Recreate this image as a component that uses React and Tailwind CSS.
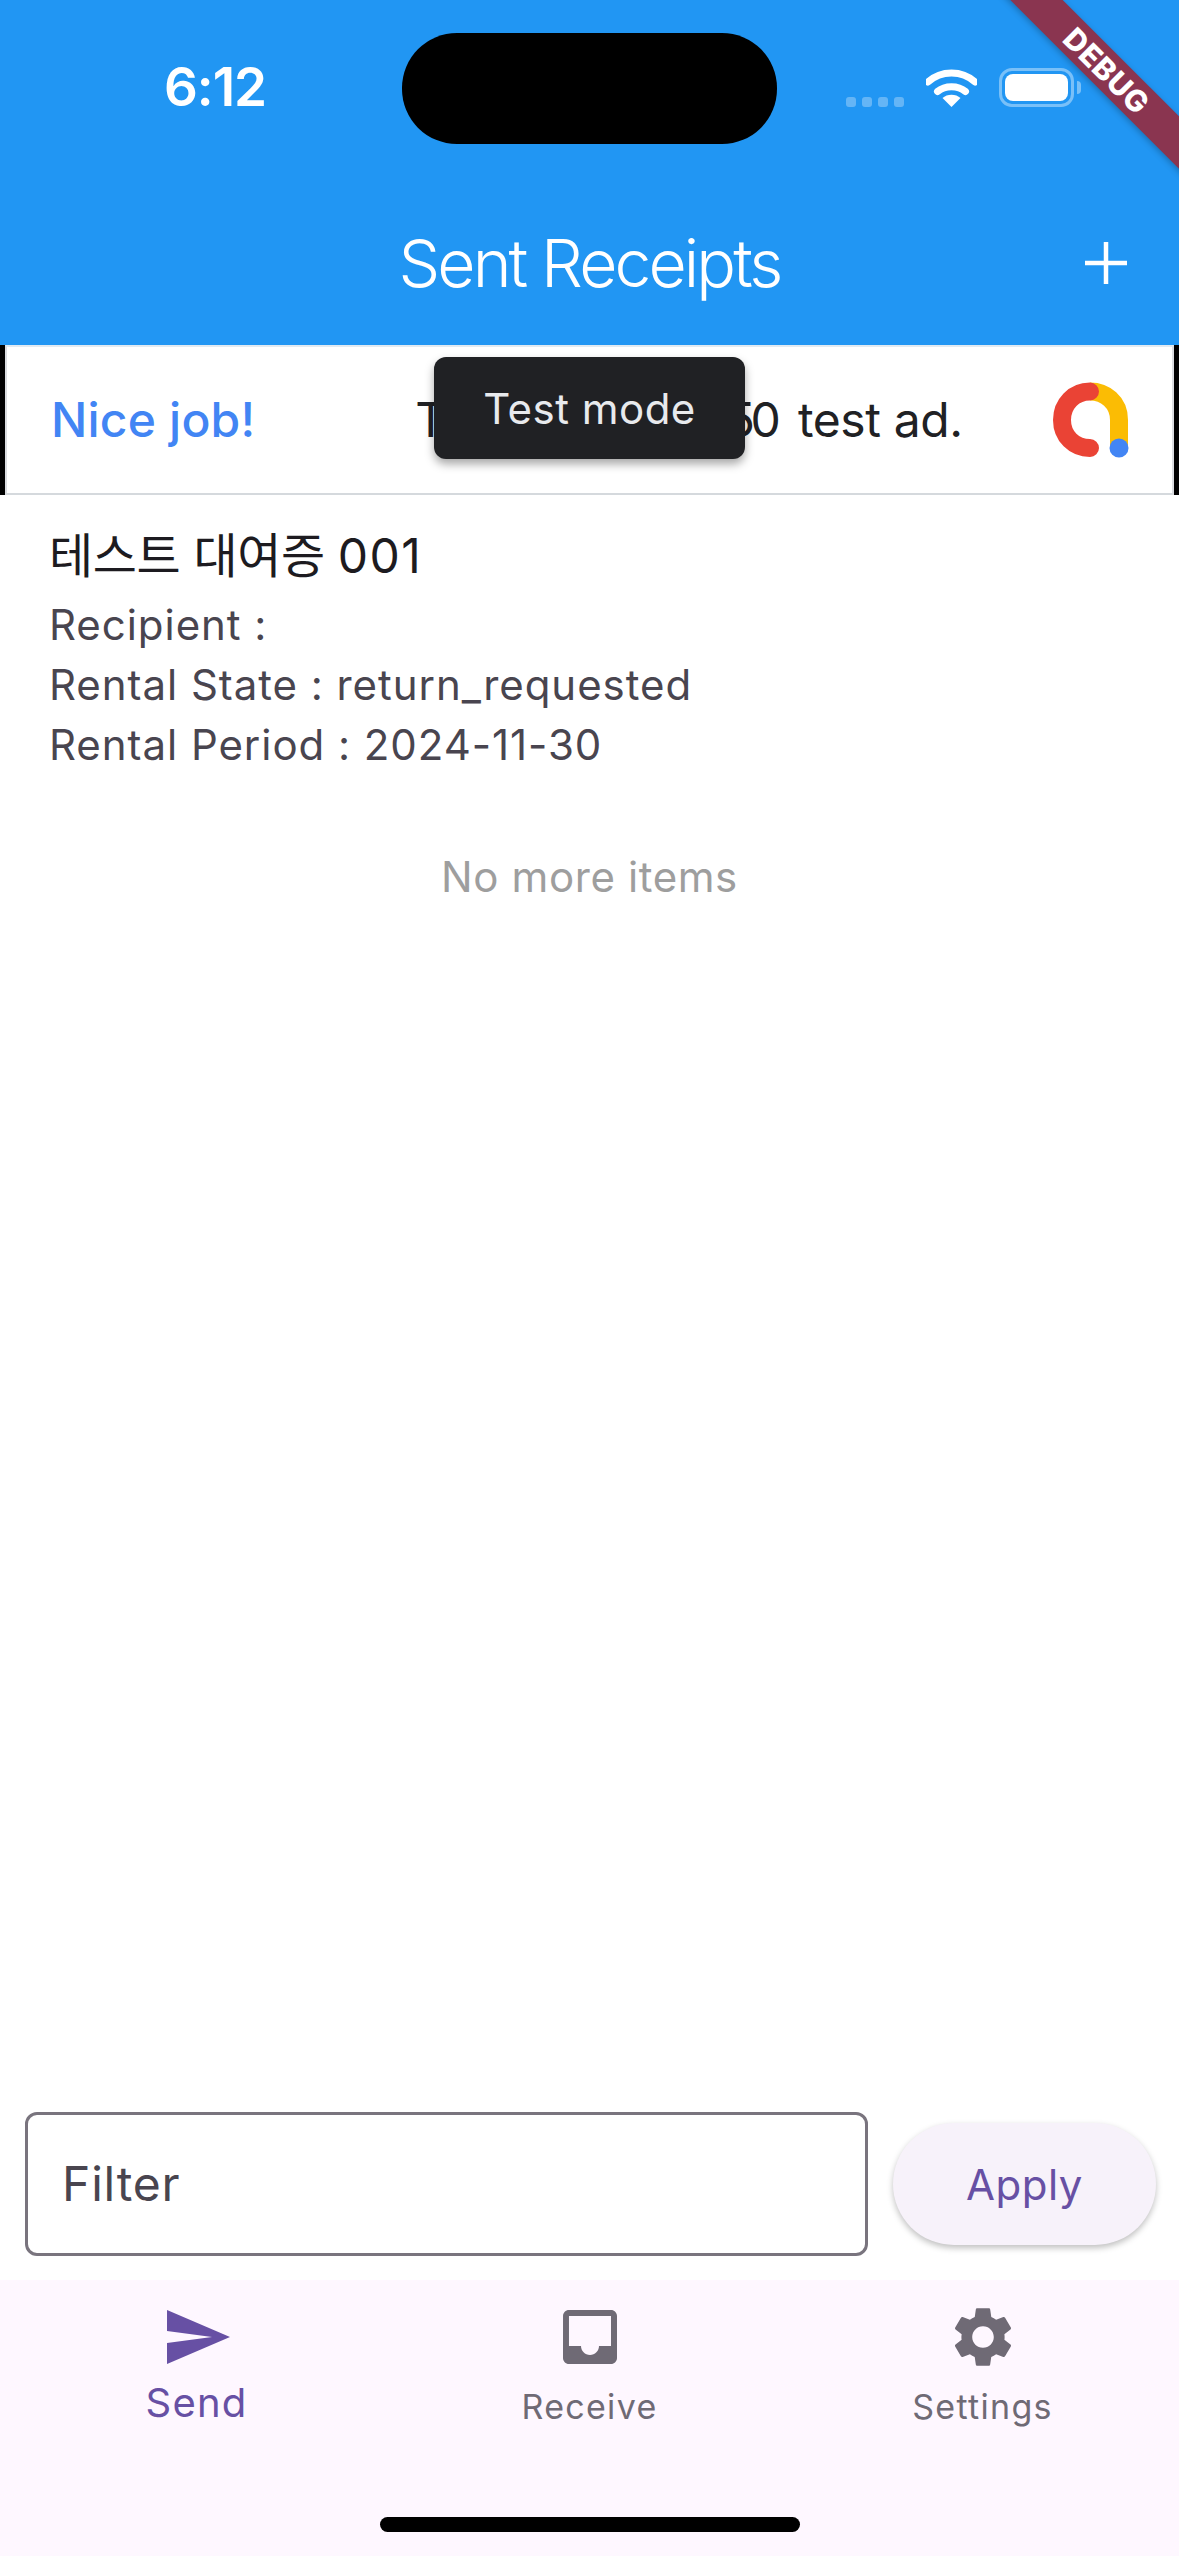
const SANS = 'font-["Inter","Noto_Sans_CJK_KR",sans-serif]'

function WifiIcon() {
  return (
    <svg width="51" height="38" viewBox="0 0 51 38" fill="none">
      <path d="M2 13 C15 1 36 1 49 13" stroke="white" strokeWidth="7" strokeLinecap="round" fill="none" />
      <path d="M11.5 22.5 C19 16 32 16 39.500 22.500" stroke="white" strokeWidth="7" strokeLinecap="round" fill="none" />
      <path d="M25.500 38 L16.500 29 C21 24.500 30 24.500 34.500 29 Z" fill="white" />
    </svg>
  )
}

function Battery() {
  return (
    <div className="flex items-center gap-[3px]">
      <div className="w-[75px] h-[39px] rounded-[13px] border-[3px] border-white/40 p-[3px]">
        <div className="w-full h-full rounded-[8px] bg-white" />
      </div>
      <div className="w-[4px] h-[13px] rounded-r-[4px] bg-white/40" />
    </div>
  )
}

function StatusBar() {
  return (
    <div className="h-[175px] flex items-start pt-[33px]">
      <div className="w-[402px] h-[111px] flex items-center justify-center pl-[28px] pb-[2px] text-white text-[53px] font-semibold tracking-[-1px]">
        6:12
      </div>
      <div className="w-[375px] h-[111px] rounded-[55px] bg-black" />
      <div className="flex items-center pl-[69px] pt-[35px]">
        <div className="flex gap-[6px] pt-[28px]">
          <span className="w-[10px] h-[10px] rounded-[3px] bg-white/30" />
          <span className="w-[10px] h-[10px] rounded-[3px] bg-white/30" />
          <span className="w-[10px] h-[10px] rounded-[3px] bg-white/30" />
          <span className="w-[10px] h-[10px] rounded-[3px] bg-white/30" />
        </div>
        <div className="ml-[22px] mr-[22px]"><WifiIcon /></div>
        <Battery />
      </div>
    </div>
  )
}

function AppBar() {
  return (
    <div className="h-[170px] grid grid-cols-[1fr_auto_1fr] items-center text-white">
      <div />
      <h1 className="text-[66px] leading-none font-light tracking-[-2.9px] mt-[6px]">Sent Receipts</h1>
      <div className="justify-self-end pr-[51px] pt-[6px]">
        <svg width="44" height="44" viewBox="0 0 44 44">
          <path d="M22 1V43M1 22H43" stroke="white" strokeWidth="4.500" />
        </svg>
      </div>
    </div>
  )
}

function AdLogo() {
  return (
    <svg width="76" height="76" viewBox="0 0 76 76" fill="none">
      <path d="M37 9.500 C52 9.500 66 20 66 38 V66" stroke="#fbbc04" strokeWidth="18" />
      <path d="M37 9.500 C21 9.500 9 22 9 38 C9 54 21 66 37 66" stroke="#ea4335" strokeWidth="18" strokeLinecap="round" />
      <circle cx="66" cy="66" r="9.500" fill="#4285f4" />
    </svg>
  )
}

function AdBanner() {
  return (
    <div className="relative h-[150px] flex bg-black px-[5px]">
      <div className="flex-1 flex items-center border-[2px] border-t-[#e1eaf2] border-x-[#dadce0] border-b-[#d5d9dd] bg-white pl-[44px] pr-[43px]">
        <span className="text-[48px] font-medium text-[#4285f4] tracking-[0.2px]">Nice job!</span>
        <span className="ml-[160px] text-[48px] text-[#202124] tracking-[-0.4px]">
          This is a 320x<span className="tracking-[-4.5px]">5</span><span className="tracking-[4px]">0</span> test ad.
        </span>
        <div className="ml-auto"><AdLogo /></div>
      </div>
      <div className="absolute left-[434px] top-[12px] w-[311px] h-[102px] rounded-[12px] bg-[#202124] shadow-[0_5px_10px_rgba(0,0,0,0.35)] flex items-center justify-center text-[#e8eaed] text-[42px] tracking-[0.5px]">
        Test mode
      </div>
    </div>
  )
}

function ReceiptRow() {
  return (
    <div className="pl-[49px] pt-[30px]">
      <div className="text-[48px] leading-[62px] text-[#1d1b20] tracking-[-0.4px]">
        테스트 대여증 <span className="tracking-[1.5px]">001</span>
      </div>
      <div className="text-[#49454f] text-[42px] leading-[60px] tracking-[0.95px] mt-[8px]">
        <div>Recipient :</div>
        <div>Rental State : return_requested</div>
        <div>Rental Period : 2024-11-30</div>
      </div>
    </div>
  )
}

function FilterBar() {
  return (
    <div className="flex items-center pl-[25px] pr-[23px] pb-[24px] gap-[25px]">
      <div className="flex-1 h-[144px] rounded-[12px] border-[3px] border-[#79747e] flex items-center pl-[34px] text-[48px] text-[#49454f] tracking-[0.8px]">
        Filter
      </div>
      <button className="w-[263px] h-[122px] rounded-full bg-[#f7f2fa] shadow-[0_3px_6px_rgba(0,0,0,0.25)] text-[#6750a4] text-[42px] tracking-[0.5px]">
        Apply
      </button>
    </div>
  )
}

function NavItem({ label, active, path }) {
  return (
    <div className={`flex-1 flex flex-col items-center ${active ? 'text-[#6750a4]' : 'text-[#6f6a75]'}`}>
      <svg width="72" height="72" viewBox="0 0 24 24" fill="currentColor"><path d={path} /></svg>
      <span className={active ? 'text-[40px] leading-[48px] mt-[6px] tracking-[1.2px]' : 'text-[34px] leading-[44px] mt-[12px] tracking-[1.3px]'}>{label}</span>
    </div>
  )
}

function BottomNav() {
  return (
    <div className="h-[276px] bg-[#fef7ff] flex flex-col pt-[21px]">
      <div className="flex">
        <NavItem label="Send" active path="M2.01 21L23 12 2.01 3 2 10l15 2-15 2z" />
        <NavItem label="Receive" path="M19 3H4.99c-1.11 0-1.98.89-1.98 2L3 19c0 1.1.88 2 1.99 2H19c1.1 0 2-.9 2-2V5c0-1.11-.9-2-2-2zm0 12h-4c0 1.66-1.35 3-3 3s-3-1.34-3-3H4.99V5H19v10z" />
        <NavItem label="Settings" path="M19.14 12.94c.04-.3.06-.61.06-.94 0-.32-.02-.64-.07-.94l2.03-1.58c.18-.14.23-.41.12-.61l-1.92-3.32c-.12-.22-.37-.29-.59-.22l-2.39.96c-.5-.38-1.03-.7-1.62-.94l-.36-2.54c-.04-.24-.24-.41-.48-.41h-3.84c-.24 0-.43.17-.47.41l-.36 2.54c-.59.24-1.13.57-1.62.94l-2.39-.96c-.22-.08-.47 0-.59.22L2.74 8.87c-.12.21-.08.47.12.61l2.03 1.58c-.05.3-.09.63-.09.94s.02.64.07.94l-2.03 1.58c-.18.14-.23.41-.12.61l1.92 3.32c.12.22.37.29.59.22l2.39-.96c.5.38 1.03.7 1.62.94l.36 2.54c.05.24.24.41.48.41h3.84c.24 0 .44-.17.47-.41l.36-2.54c.59-.24 1.13-.56 1.62-.94l2.39.96c.22.08.47 0 .59-.22l1.92-3.32c.12-.22.07-.47-.12-.61l-2.01-1.58zM12 15.6c-1.98 0-3.6-1.62-3.6-3.6s1.62-3.6 3.6-3.6 3.6 1.62 3.6 3.6-1.62 3.6-3.6 3.6z" />
      </div>
      <div className="mt-auto mb-[24px] mx-auto w-[420px] h-[15px] rounded-full bg-black" />
    </div>
  )
}

export default function App() {
  return (
    <div className={`relative w-[1179px] h-[2556px] overflow-hidden bg-white flex flex-col ${SANS}`}>
      <div className="bg-[#2196f3]">
        <StatusBar />
        <AppBar />
      </div>
      <AdBanner />
      <div className="flex-1">
        <ReceiptRow />
        <div className="mt-[72px] text-center text-[42px] leading-[60px] text-[#9e9e9e] tracking-[0.6px]">No more items</div>
      </div>
      <FilterBar />
      <BottomNav />
      {/* debug ribbon */}
      <div className="absolute left-[967px] top-[52px] w-[280px] h-[37px] rotate-45 bg-[#8a3550] shadow-[0_2px_6px_rgba(0,0,0,0.25)] flex items-center justify-center text-white text-[30px] leading-none font-extrabold tracking-[0.5px]">
        DEBUG
      </div>
    </div>
  )
}
